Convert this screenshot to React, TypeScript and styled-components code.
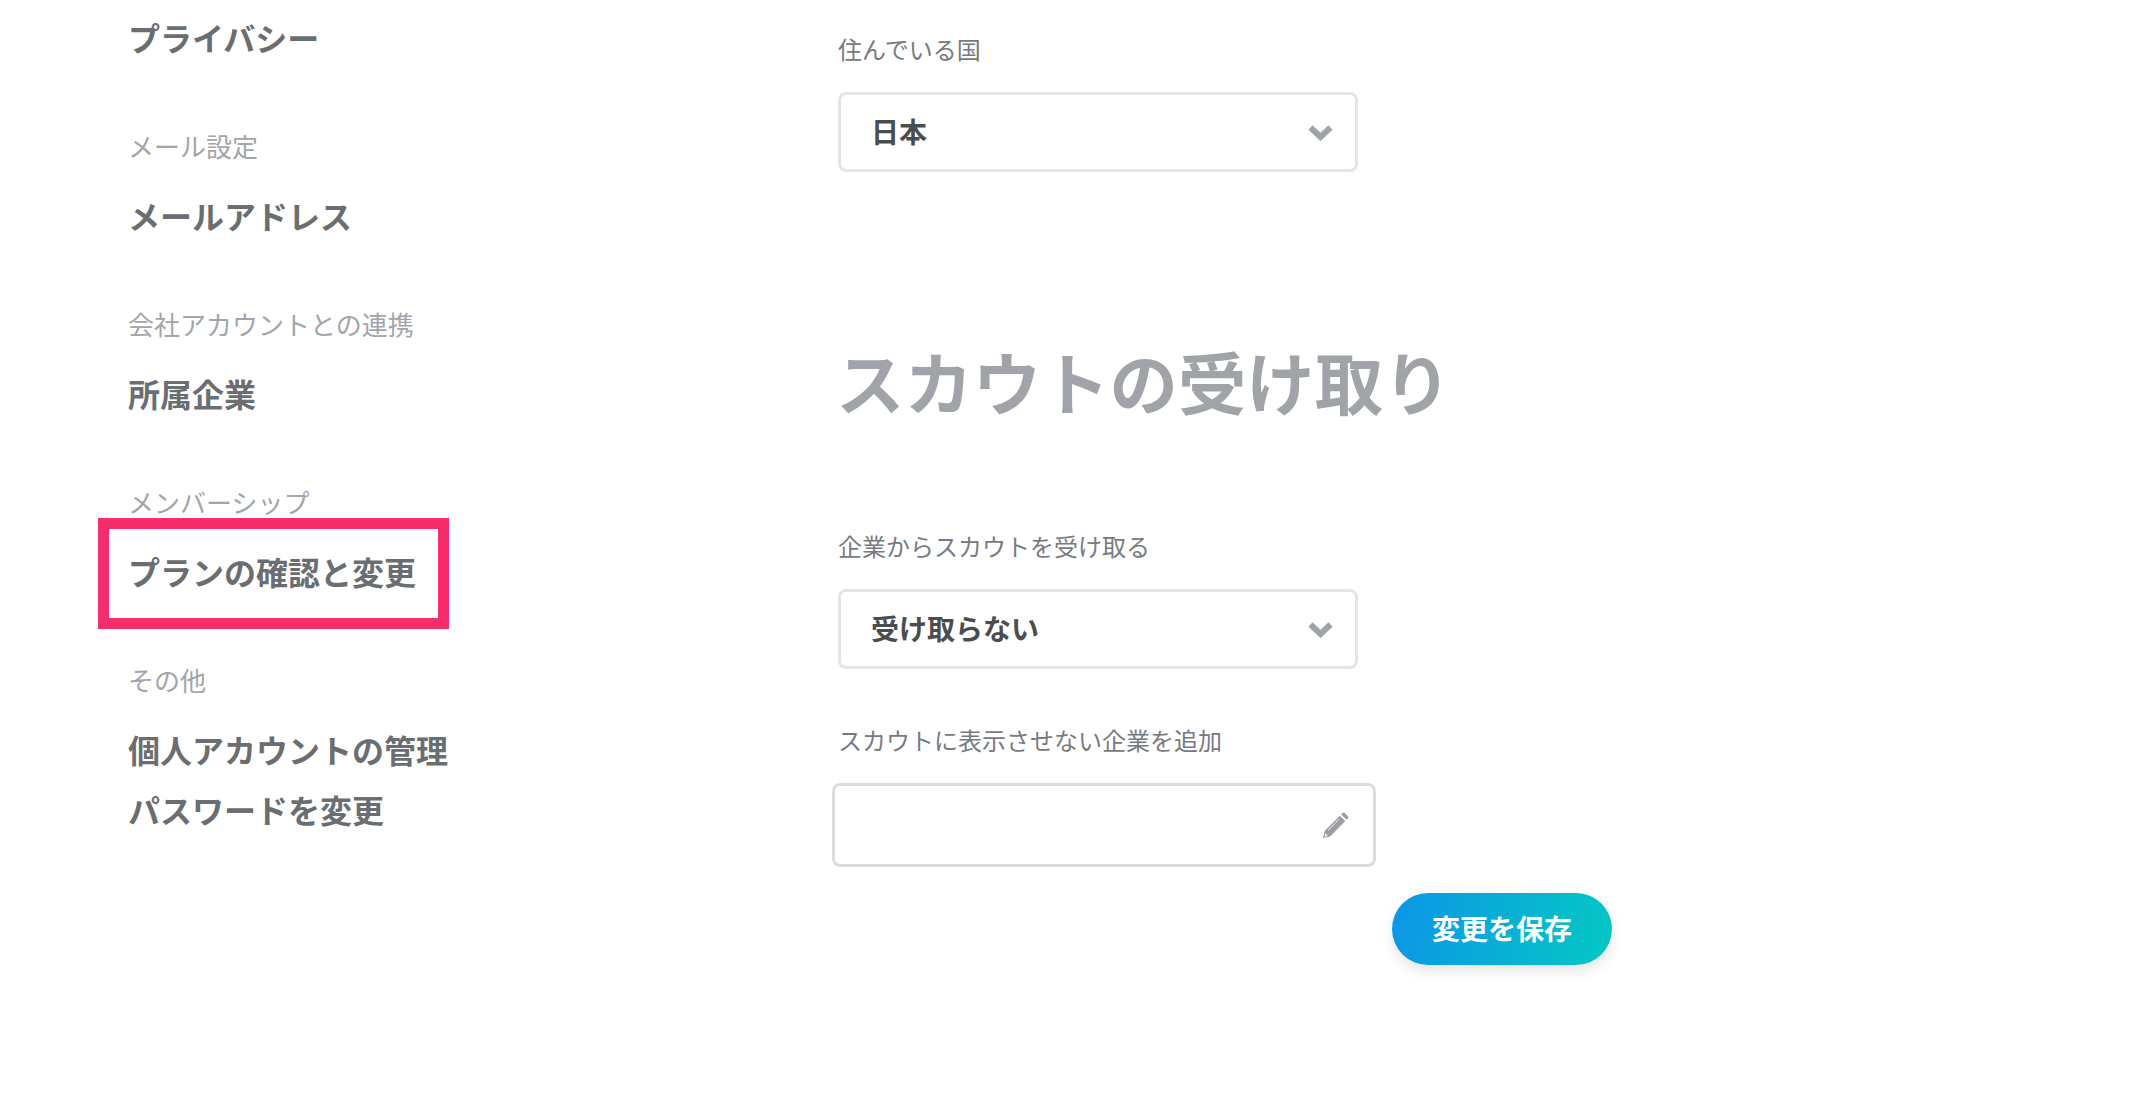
import React from "react";
import styled, { createGlobalStyle } from "styled-components";

const Global = createGlobalStyle`
  html, body { margin: 0; padding: 0; background: #fff; }
  body { font-family: "Noto Sans CJK JP", "Noto Sans", sans-serif; overflow: hidden; }
`;

const Page = styled.div`
  display: flex;
  width: 2144px;
  height: 1104px;
  overflow: hidden;
  background: #fff;
`;

const Sidebar = styled.nav`
  width: 838px;
  flex: none;
  box-sizing: border-box;
  padding: 8px 0 0 128px;
  display: flex;
  flex-direction: column;
`;

const NavGroup = styled.div`
  display: flex;
  flex-direction: column;
  margin-bottom: 58px;
`;

const NavLabel = styled.div`
  font-size: 26px;
  line-height: 40px;
  color: #a2a6aa;
  margin-bottom: 20px;
  white-space: nowrap;
`;

const NavItem = styled.a`
  display: block;
  font-size: 32px;
  line-height: 58px;
  padding-bottom: 2px;
  font-weight: 700;
  color: #6a6e71;
  white-space: nowrap;
`;

const HighlightWrap = styled.div`
  position: relative;
`;

const Highlight = styled.div`
  position: absolute;
  left: -30px;
  top: -24px;
  width: 351px;
  height: 111px;
  box-sizing: border-box;
  border: 11px solid #f52d6a;
`;

const Main = styled.main`
  width: 774px;
  flex: none;
  display: flex;
  flex-direction: column;
  padding-top: 29px;
`;

const FieldLabel = styled.label`
  font-size: 24px;
  line-height: 40px;
  color: #777b80;
  white-space: nowrap;
  margin-bottom: 23px;
`;

const SelectBox = styled.div`
  width: 520px;
  height: 80px;
  box-sizing: border-box;
  border: 3px solid #e4e5e6;
  border-radius: 8px;
  padding: 0 22px 3px 30px;
  display: flex;
  align-items: center;
  justify-content: space-between;
  font-size: 28px;
  font-weight: 700;
  color: #4a4d50;
  background: #fff;
`;

const Chevron = styled.svg`
  width: 25px;
  height: 17px;
  margin-top: 4px;
  fill: none;
  stroke: #a0a3a7;
  stroke-width: 6;
`;

const Heading = styled.h2`
  margin: 159px 0 0 -2px;
  font-size: 68.4px;
  line-height: 100px;
  font-weight: 700;
  color: #a0a4a8;
  white-space: nowrap;
`;

const SecondLabelSpacer = styled.div`
  height: 95px;
`;

const ThirdLabelSpacer = styled.div`
  height: 51px;
`;

const InputBox = styled.div`
  width: 544px;
  height: 84px;
  box-sizing: border-box;
  border: 3px solid #d9dce0;
  border-radius: 8px;
  margin-left: -6px;
  padding-right: 24px;
  display: flex;
  align-items: center;
  justify-content: flex-end;
`;

const Pencil = styled.svg`
  width: 26px;
  height: 26px;
  fill: #9a9da1;
`;

const SaveButton = styled.button`
  align-self: flex-end;
  width: 220px;
  height: 72px;
  margin-top: 26px;
  padding: 0 0 3px;
  border: none;
  border-radius: 36px;
  background: linear-gradient(100deg, #0c96e6 0%, #04c8c4 100%);
  box-shadow: 0 6px 14px rgba(0, 0, 0, 0.1);
  color: #fff;
  font-family: inherit;
  font-size: 28px;
  font-weight: 700;
`;

const ChevronIcon = () => (
  <Chevron viewBox="0 0 25 17">
    <polyline points="2.5,3.5 12.5,13 22.5,3.5" />
  </Chevron>
);

const PencilIcon = () => (
  <Pencil viewBox="0 0 24 24">
    <path d="M16.8 2.2L18 1q1-1 2 0l3 3q1 1 0 2l-1.2 1.2z" />
    <path d="M15.6 3.4l5 5L6.5 22.5 0 24l1.5-6.5z" />
    <path d="M14.6 7L4.6 17" stroke="#fff" strokeWidth="0.8" fill="none" />
    <path d="M2 19.5l2.5 2.5-3 .8z" fill="#fff" />
  </Pencil>
);

export default function App() {
  return (
    <Page>
      <Global />
      <Sidebar>
        <NavGroup>
          <NavItem>プライバシー</NavItem>
        </NavGroup>
        <NavGroup>
          <NavLabel>メール設定</NavLabel>
          <NavItem>メールアドレス</NavItem>
        </NavGroup>
        <NavGroup>
          <NavLabel>会社アカウントとの連携</NavLabel>
          <NavItem>所属企業</NavItem>
        </NavGroup>
        <NavGroup>
          <NavLabel>メンバーシップ</NavLabel>
          <HighlightWrap>
            <NavItem>プランの確認と変更</NavItem>
            <Highlight />
          </HighlightWrap>
        </NavGroup>
        <NavGroup>
          <NavLabel>その他</NavLabel>
          <NavItem>個人アカウントの管理</NavItem>
          <NavItem>パスワードを変更</NavItem>
        </NavGroup>
      </Sidebar>
      <Main>
        <FieldLabel>住んでいる国</FieldLabel>
        <SelectBox>
          日本
          <ChevronIcon />
        </SelectBox>
        <Heading>スカウトの受け取り</Heading>
        <SecondLabelSpacer />
        <FieldLabel>企業からスカウトを受け取る</FieldLabel>
        <SelectBox>
          受け取らない
          <ChevronIcon />
        </SelectBox>
        <ThirdLabelSpacer />
        <FieldLabel>スカウトに表示させない企業を追加</FieldLabel>
        <InputBox>
          <PencilIcon />
        </InputBox>
        <SaveButton>変更を保存</SaveButton>
      </Main>
    </Page>
  );
}
